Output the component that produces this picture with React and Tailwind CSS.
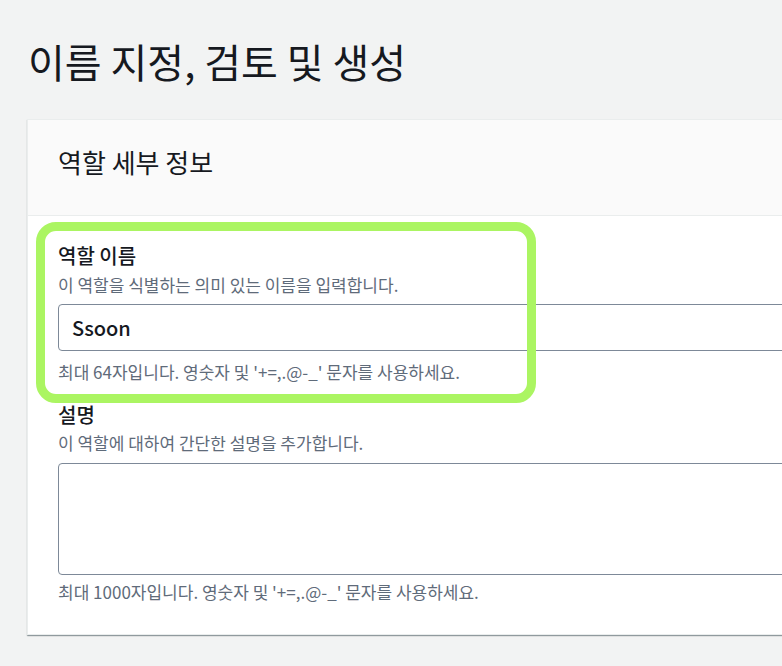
import React from 'react';

const font = { fontFamily: '"Noto Sans CJK KR", "Noto Sans", sans-serif' };

const Label = ({ children, className = '' }) => (
  <div className={`text-[20px] leading-[24px] font-medium text-[#16191f] ${className}`}>{children}</div>
);

const Hint = ({ children, className = '' }) => (
  <div className={`text-[17px] leading-[20px] text-[#5f6b7a] ${className}`}>{children}</div>
);

export default function App() {
  return (
    <div className="min-h-screen w-full overflow-hidden bg-[#f2f3f3]" style={font}>
      <h1 className="pl-[28px] pt-[37px] text-[40px] leading-[48px] font-normal text-[#16191f]">
        이름 지정, 검토 및 생성
      </h1>

      <div className="relative ml-[27px] mt-[34px] w-[820px] bg-white border border-[#eaeded] shadow-[0_1px_1px_0_rgba(0,28,36,0.3),1px_1px_1px_0_rgba(0,28,36,0.15)]">
        <div className="h-[96px] pt-[26px] px-[30px] bg-[#fafafa] border-b border-[#eaeded]">
          <h2 className="text-[26px] leading-[32px] font-normal text-[#16191f]">역할 세부 정보</h2>
        </div>

        <div className="px-[30px] pt-[28px] pb-[32px] flex flex-col">
          <Label>역할 이름</Label>
          <Hint className="mt-[7px]">이 역할을 식별하는 의미 있는 이름을 입력합니다.</Hint>
          <div className="mt-[9px] h-[47px] w-[760px] rounded-[4px] border border-[#7d8998] bg-white flex items-center px-[13px]">
            <span className="text-[20px] leading-[24px] font-medium text-[#16191f]">Ssoon</span>
          </div>
          <Hint className="mt-[11px]">최대 64자입니다. 영숫자 및 '+=,.@-_' 문자를 사용하세요.</Hint>

          <Label className="mt-[21px]">설명</Label>
          <Hint className="mt-[6px]">이 역할에 대하여 간단한 설명을 추가합니다.</Hint>
          <div className="mt-[10px] h-[112px] w-[760px] rounded-[4px] border border-[#7d8998] bg-white" />
          <Hint className="mt-[7px]">최대 1000자입니다. 영숫자 및 '+=,.@-_' 문자를 사용하세요.</Hint>
        </div>

        <div className="pointer-events-none absolute left-[8px] top-[102px] w-[500px] h-[181px] rounded-[20px] border-[9px] border-[#abf562]" />
      </div>
    </div>
  );
}
